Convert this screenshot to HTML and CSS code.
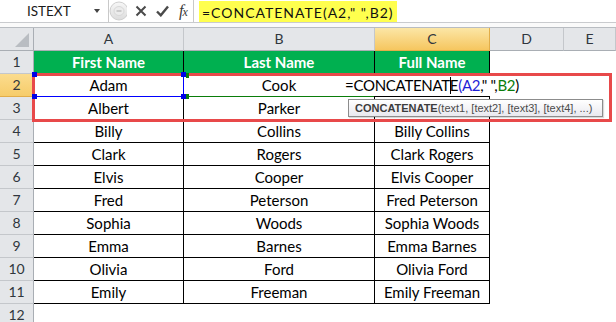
FILE: index.html
```html
<!DOCTYPE html>
<html>
<head>
<meta charset="utf-8">
<link rel="stylesheet" href="styles.css">
</head>
<body>
<div class="app">
  <div class="fbar">
    <div class="namebox"><span class="nb-text">ISTEXT</span><span class="nb-arrow"></span></div>
    <div class="fbtns">
      <svg class="lens" width="18" height="20" viewBox="0 0 18 20">
        <defs><linearGradient id="lg" x1="0" y1="0" x2="0" y2="1"><stop offset="0" stop-color="#f7f7f7"/><stop offset="1" stop-color="#dcdcdc"/></linearGradient></defs>
        <ellipse cx="10" cy="10" rx="9" ry="9" fill="url(#lg)" stroke="#cfcfcf"/>
        <ellipse cx="10" cy="10" rx="5" ry="4.5" fill="#ececec" stroke="#d8d8d8"/>
        <line x1="7.5" y1="10" x2="12.5" y2="10" stroke="#b5b5b5" stroke-width="1.2"/>
      </svg>
      <svg class="ico icx" width="12" height="12" viewBox="0 0 12 12"><path d="M1.5 1.5 L10.5 10.5 M10.5 1.5 L1.5 10.5" stroke="#4a4a4a" stroke-width="2" fill="none"/></svg>
      <svg class="ico icv" width="13" height="12" viewBox="0 0 13 12"><path d="M1 6.5 L4.8 10.3 L12 1.5" stroke="#4a4a4a" stroke-width="2.4" fill="none"/></svg>
      <span class="fx">f<span class="fx-x">x</span></span>
    </div>
    <div class="finput"><span class="fhl">=CONCATENATE(A2," ",B2)</span></div>
  </div>
  <div class="strip"></div>
  <div class="sheet">
    <div class="grid">
      <div class="corner"><span class="tri"></span></div>
      <div class="ch">A</div><div class="ch">B</div><div class="ch sel">C</div><div class="ch">D</div><div class="ch">E</div>

      <div class="rh">1</div><div class="c t hd">First Name</div><div class="c t hd">Last Name</div><div class="c t hd">Full Name</div><div class="c"></div><div class="c"></div>
      <div class="rh sel">2</div><div class="c t">Adam</div><div class="c t">Cook</div><div class="c t edit"><span class="editor">=CONCATENAT<span class="caret"></span>E<span class="ref-a">(A2</span>," ",<span class="ref-b">B2</span>)</span></div><div class="c"></div><div class="c"></div>
      <div class="rh">3</div><div class="c t">Albert</div><div class="c t">Parker</div><div class="c t"></div><div class="c"></div><div class="c"></div>
      <div class="rh">4</div><div class="c t">Billy</div><div class="c t">Collins</div><div class="c t">Billy Collins</div><div class="c"></div><div class="c"></div>
      <div class="rh">5</div><div class="c t">Clark</div><div class="c t">Rogers</div><div class="c t">Clark Rogers</div><div class="c"></div><div class="c"></div>
      <div class="rh">6</div><div class="c t">Elvis</div><div class="c t">Cooper</div><div class="c t">Elvis Cooper</div><div class="c"></div><div class="c"></div>
      <div class="rh">7</div><div class="c t">Fred</div><div class="c t">Peterson</div><div class="c t">Fred Peterson</div><div class="c"></div><div class="c"></div>
      <div class="rh">8</div><div class="c t">Sophia</div><div class="c t">Woods</div><div class="c t">Sophia Woods</div><div class="c"></div><div class="c"></div>
      <div class="rh">9</div><div class="c t">Emma</div><div class="c t">Barnes</div><div class="c t">Emma Barnes</div><div class="c"></div><div class="c"></div>
      <div class="rh">10</div><div class="c t">Olivia</div><div class="c t">Ford</div><div class="c t">Olivia Ford</div><div class="c"></div><div class="c"></div>
      <div class="rh">11</div><div class="c t">Emily</div><div class="c t">Freeman</div><div class="c t">Emily Freeman</div><div class="c"></div><div class="c"></div>
      <div class="rh">12</div><div class="c"></div><div class="c"></div><div class="c"></div><div class="c"></div><div class="c"></div>
    </div>

    <div class="rng-blue"></div>
    <div class="rng-green"></div>
    <span class="hdl blue h1"></span><span class="hdl blue h2"></span><span class="hdl blue h3"></span><span class="hdl blue h4"></span>
    <span class="hdl green h5"></span><span class="hdl green h6"></span>
    <div class="redbox"></div>
    <div class="tip"><b>CONCATENATE</b>(text1, [text2], [text3], [text4], ...)</div>
  </div>
</div>
</body>
</html>
```

FILE: styles.css
```css
* { box-sizing: border-box; }
html, body { margin: 0; padding: 0; background: #fff; }
body { width: 616px; height: 322px; overflow: hidden; font-family: Lato, "Noto Sans", sans-serif; }

.fbar {
  height: 23px;
  display: flex;
  border-bottom: 1px solid #c9cbce;
  background: #fff;
}
.namebox {
  flex: 0 0 109px;
  border-right: 1px solid #c9c9c9;
  display: flex;
  align-items: center;
}
.nb-text {
  flex: 0 0 94px;
  padding-left: 27px;
  font-size: 13.5px;
  color: #1a1a1a;
}
.nb-arrow {
  width: 0; height: 0;
  border-left: 3.5px solid transparent;
  border-right: 3.5px solid transparent;
  border-top: 4px solid #444;
}
.fbtns {
  flex: 0 0 85px;
  display: flex;
  align-items: center;
  border-right: 1px solid #c9c9c9;
}
.lens { margin-right: 8px; }
.icx { margin-right: 9px; }
.icv { margin-right: 10px; }
.fx {
  font-family: "Liberation Serif", serif;
  font-style: italic;
  font-size: 16px;
  color: #3a3a3a;
  letter-spacing: -1px;
}
.fx-x { font-size: 12px; }
.finput {
  flex: 1;
  display: flex;
  align-items: stretch;
  padding: 1px 0 0 5px;
}
.fhl {
  background: #ffff4e;
  padding: 3px 3px 0 3px;
  font-size: 14px;
  letter-spacing: 1px;
  color: #111;
  line-height: 18px;
}

.strip {
  height: 5px;
  background: #fafafa;
  border-bottom: 1px solid #b8bcc1;
}

.sheet { position: relative; }
.grid {
  display: grid;
  grid-template-columns: 34px 150px 191px 115px 74px 1fr;
  grid-auto-rows: 23px;
}
.corner, .ch {
  background: #e4e6e9;
  border-right: 1px solid #c4c7cb;
  border-bottom: 1px solid #a9aeb4;
}
.corner { position: relative; border-right-color: #a9aeb4; }
.tri {
  position: absolute;
  right: 4px; bottom: 3px;
  width: 0; height: 0;
  border-left: 14px solid transparent;
  border-bottom: 14px solid #b9bdc2;
}
.ch {
  text-align: center;
  font-size: 14px;
  line-height: 22px;
  color: #30363d;
}
.ch.sel {
  background: linear-gradient(#fbe6a6, #f6c65f);
  border-right-color: #e2ad48;
  border-bottom-color: #e2ad48;
}
.rh {
  background: #e4e6e9;
  border-right: 1px solid #a9aeb4;
  border-bottom: 1px solid #c4c7cb;
  text-align: center;
  font-size: 14px;
  line-height: 22px;
  color: #30363d;
}
.rh.sel {
  background: linear-gradient(#fbdc8e, #f6cc6a);
  border-bottom-color: #e2ad48;
}
.c {
  border-right: 1px solid transparent;
  border-bottom: 1px solid transparent;
  text-align: center;
  font-size: 15px;
  line-height: 22px;
  color: #000;
  white-space: nowrap;
}
.c.t { border-right-color: #000; border-bottom-color: #000; }
.c.hd { background: #00b050; color: #fff; font-weight: bold; }
.c.edit {
  display: flex;
  justify-content: center;
  overflow: visible;
}
.editor {
  background: #fff;
  padding: 0 4px;
  height: 22px;
  letter-spacing: -0.3px;
  position: relative;
  z-index: 1;
}
.caret {
  display: inline-block;
  width: 1px;
  height: 17px;
  background: #000;
  vertical-align: -3px;
  margin: 0 -1px 0 0;
}
.ref-a { color: #1f1fd6; }
.ref-b { color: #0a7d0a; }

.rng-blue {
  position: absolute;
  left: 34px; top: 46px;
  width: 150px; height: 23px;
  border: 1px solid #0000ff;
  z-index: 2;
}
.rng-green {
  position: absolute;
  left: 184px; top: 68px;
  width: 190px; height: 1px;
  background: #0a7d0a;
  z-index: 2;
}
.hdl { position: absolute; width: 5px; height: 5px; z-index: 4; }
.hdl.blue { background: #0000e6; }
.hdl.green { background: #0a7d0a; width: 3px; }
.h1 { left: 32px; top: 44px; }
.h2 { left: 181px; top: 44px; }
.h3 { left: 32px; top: 66px; }
.h4 { left: 181px; top: 66px; }
.h5 { left: 186px; top: 45px; }
.h6 { left: 186px; top: 66px; }

.redbox {
  position: absolute;
  left: 32px; top: 45px;
  width: 580px; height: 49px;
  border: 3px solid #e8494a;
  z-index: 3;
}
.tip {
  position: absolute;
  left: 348px; top: 71px;
  width: 255px; height: 18px;
  border: 1px solid #8c8c8c;
  background: linear-gradient(#ffffff, #e9e9ef);
  font-family: "Liberation Sans", Arial, sans-serif;
  font-size: 11px;
  line-height: 16px;
  color: #4c4c4c;
  padding-left: 6px;
  white-space: nowrap;
  z-index: 2;
  box-shadow: 1px 1px 1px rgba(0,0,0,0.15);
}
.tip b { color: #3c3c3c; }
```
